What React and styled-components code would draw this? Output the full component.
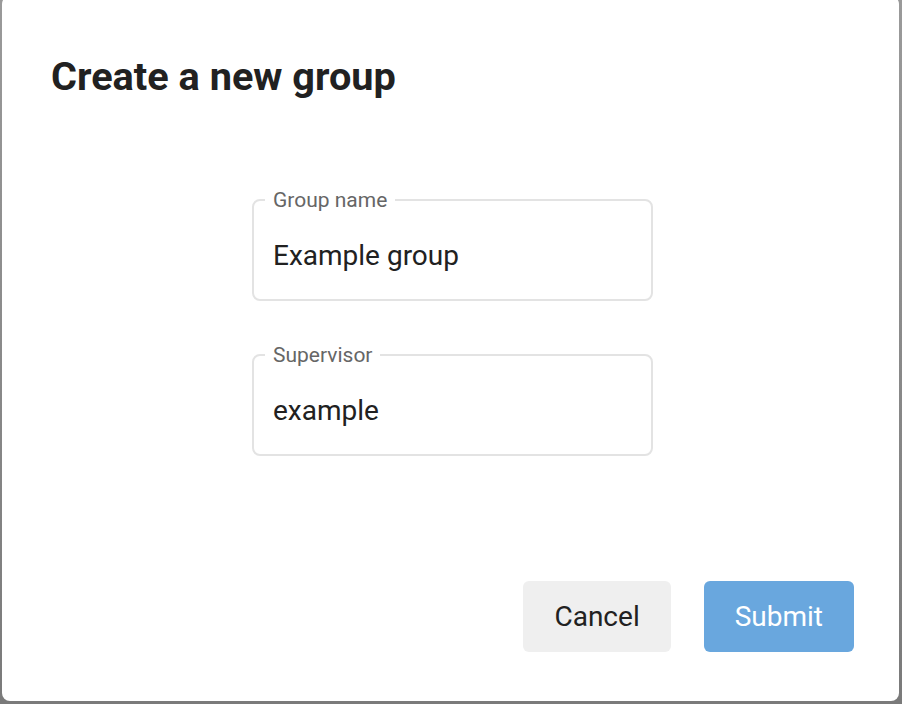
import React from 'react';
import styled, { createGlobalStyle } from 'styled-components';

const GlobalStyle = createGlobalStyle`
  html, body {
    margin: 0;
    padding: 0;
    background: #8c8c8c;
    overflow: hidden;
  }
  body {
    font-family: Roboto, "Liberation Sans", sans-serif;
  }
`

const Backdrop = styled.div`
  width: 902px;
  height: 704px;
  background: linear-gradient(180deg, #9a9a9a 0%, #7a7a7a 100%);
  overflow: hidden;
`

const Dialog = styled.section`
  box-sizing: border-box;
  width: 897px;
  height: 705px;
  margin: -4px 0 0 2px;
  background: #ffffff;
  border-radius: 8px;
  display: flex;
  flex-direction: column;
  padding: 57px 45px 0 49px;
`

const Title = styled.h2`
  margin: 0;
  font-size: 39.7px;
  line-height: 48px;
  font-weight: 700;
  color: #212121;
`

const Form = styled.div`
  display: flex;
  flex-direction: column;
  align-items: center;
  gap: 42px;
  margin-top: 87px;
`

const Field = styled.fieldset`
  box-sizing: border-box;
  width: 401px;
  height: 113px;
  margin: 0;
  padding: 0 19px;
  border: 2px solid #e3e3e3;
  border-radius: 8px;
  display: flex;
  flex-direction: column;
`

const Legend = styled.legend`
  padding: 0 8px;
  margin-left: -8px;
  font-size: 21px;
  line-height: 24px;
  color: #666666;
`

const Value = styled.div`
  margin-top: 27px;
  font-size: 28px;
  line-height: 34px;
  color: #212121;
`

const Actions = styled.div`
  display: flex;
  justify-content: flex-end;
  gap: 33px;
  margin-top: auto;
  margin-bottom: 49px;
`

const Button = styled.button`
  height: 71px;
  padding: 0 31px;
  border: none;
  border-radius: 6px;
  font-family: Roboto, "Liberation Sans", sans-serif;
  font-size: 28px;
  background: ${p => (p.$primary ? '#69a7de' : '#efefef')};
  color: ${p => (p.$primary ? '#ffffff' : '#212121')};
  cursor: pointer;
`

const TextField = ({ label, value }) => (
  <Field>
    <Legend>{label}</Legend>
    <Value>{value}</Value>
  </Field>
);

const App = () => {
  return (
    <Backdrop>
      <GlobalStyle />
      <Dialog>
        <Title>Create a new group</Title>
        <Form>
          <TextField label="Group name" value="Example group" />
          <TextField label="Supervisor" value="example" />
        </Form>
        <Actions>
          <Button>Cancel</Button>
          <Button $primary>Submit</Button>
        </Actions>
      </Dialog>
    </Backdrop>
  );
}

export default App;
